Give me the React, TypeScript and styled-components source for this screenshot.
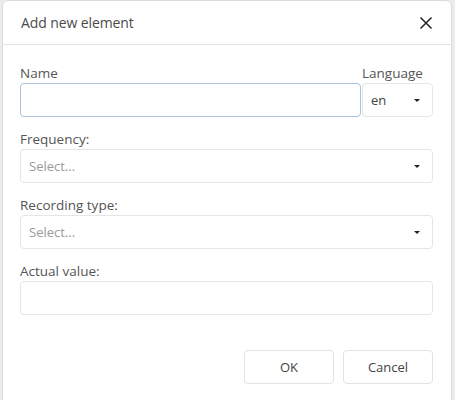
import React from "react";
import styled, { createGlobalStyle } from "styled-components";

const GlobalStyle = createGlobalStyle`
  html, body {
    margin: 0;
    padding: 0;
    background: #ececec;
    font-family: "Open Sans", "Noto Sans", sans-serif;
  }
  * {
    box-sizing: border-box;
  }
`;

const Backdrop = styled.div`
  width: 455px;
  height: 400px;
  overflow: hidden;
  padding: 0 3px 0 2px;
`;

const Dialog = styled.div`
  background: #fff;
  border: 1px solid #dcdcdc;
  border-radius: 6px;
  height: 410px;
  display: flex;
  flex-direction: column;
`;

const Header = styled.div`
  height: 44px;
  border-bottom: 1px solid #e4e4e4;
  display: flex;
  align-items: center;
  justify-content: space-between;
  padding: 0 18px 0 18px;
`;

const Title = styled.div`
  font-size: 14px;
  color: #4a4a4a;
  letter-spacing: -0.1px;
`;

const CloseButton = styled.button`
  border: 0;
  background: none;
  padding: 0;
  width: 14px;
  height: 14px;
  display: flex;
  cursor: pointer;
`;

const Body = styled.div`
  padding: 18px 18px 0 17px;
  display: flex;
  flex-direction: column;
  gap: 12px;
`;

const Row = styled.div`
  display: flex;
  gap: 1px;
`;

const Field = styled.div<{ grow?: boolean; width?: string }>`
  display: flex;
  flex-direction: column;
  flex: ${(p) => (p.grow ? "1" : "none")};
  width: ${(p) => p.width || "auto"};
`;

const Label = styled.label`
  font-size: 13.5px;
  color: #555;
  height: 20px;
  line-height: 20px;
  white-space: nowrap;
`;

const TextInput = styled.div<{ focused?: boolean }>`
  height: 34px;
  border: 1px solid ${(p) => (p.focused ? "#a9c3df" : "#e6e6e6")};
  border-radius: 4px;
  background: #fff;
`;

const SelectBox = styled.div`
  height: 34px;
  border: 1px solid #e6e6e6;
  border-radius: 4px;
  display: flex;
  align-items: center;
  justify-content: space-between;
  padding: 0 12px 0 8px;
`;

const SelectText = styled.span<{ placeholder?: boolean }>`
  font-size: 13px;
  color: ${(p) => (p.placeholder ? "#9a9a9a" : "#444")};
`;

const Caret = styled.span`
  width: 0;
  height: 0;
  border-left: 3px solid transparent;
  border-right: 3px solid transparent;
  border-top: 3.5px solid #222;
`;

const Footer = styled.div`
  display: flex;
  justify-content: flex-end;
  gap: 9px;
  padding: 35px 18px 0 0;
`;

const Button = styled.button`
  width: 90px;
  height: 34px;
  border: 1px solid #e2e2e2;
  border-radius: 4px;
  background: #fff;
  font-family: "Open Sans", "Noto Sans", sans-serif;
  font-size: 13px;
  color: #444;
`;

export default function App() {
  return (
    <>
      <GlobalStyle />
      <Backdrop>
        <Dialog>
          <Header>
            <Title>Add new element</Title>
            <CloseButton aria-label="Close">
              <svg width="14" height="14" viewBox="0 0 14 14">
                <path d="M1.5 1.5 L12.5 12.5 M12.5 1.5 L1.5 12.5" stroke="#222" strokeWidth="1.5" />
              </svg>
            </CloseButton>
          </Header>
          <Body>
            <Row>
              <Field grow>
                <Label>Name</Label>
                <TextInput focused />
              </Field>
              <Field width="71px">
                <Label>Language</Label>
                <SelectBox>
                  <SelectText>en</SelectText>
                  <Caret />
                </SelectBox>
              </Field>
            </Row>
            <Field>
              <Label>Frequency:</Label>
              <SelectBox>
                <SelectText placeholder>Select...</SelectText>
                <Caret />
              </SelectBox>
            </Field>
            <Field>
              <Label>Recording type:</Label>
              <SelectBox>
                <SelectText placeholder>Select...</SelectText>
                <Caret />
              </SelectBox>
            </Field>
            <Field>
              <Label>Actual value:</Label>
              <TextInput />
            </Field>
          </Body>
          <Footer>
            <Button>OK</Button>
            <Button>Cancel</Button>
          </Footer>
        </Dialog>
      </Backdrop>
    </>
  );
}
